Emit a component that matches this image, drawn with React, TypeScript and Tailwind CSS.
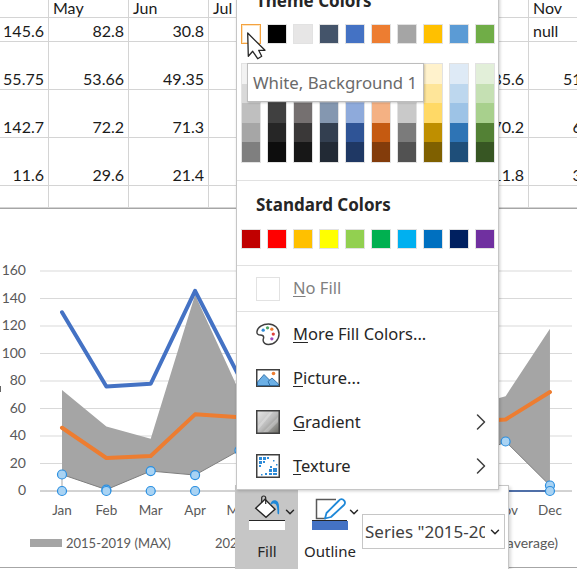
import type { ReactNode } from "react"
import { ChevronDown, ChevronRight } from "lucide-react"

const sheetRows = [
    { h: "h-[18px]", cells: ["", "May", "Jun", "Jul", "", "", "", "Nov"], head: true },
    { h: "h-[24px]", cells: ["145.6", "82.8", "30.8", "", "", "", "", "null"] },
    { h: "h-[48px]", cells: ["55.75", "53.66", "49.35", "", "", "", "85.6", "51.25"] },
    { h: "h-[48px]", cells: ["142.7", "72.2", "71.3", "", "", "", "70.2", "60.4"] },
    { h: "h-[48px]", cells: ["11.6", "29.6", "21.4", "", "", "", "11.8", "36.1"] },
    { h: "h-[22px]", cells: ["", "", "", "", "", "", "", ""] },
]

const themeTop = ["#ffffff", "#000000", "#e7e6e6", "#44546a", "#4472c4", "#ed7d31", "#a5a5a5", "#ffc000", "#5b9bd5", "#70ad47"]

const themeShades = [
    ["#f2f2f2", "#d9d9d9", "#bfbfbf", "#a6a6a6", "#7f7f7f"],
    ["#7f7f7f", "#595959", "#404040", "#262626", "#0d0d0d"],
    ["#d0cece", "#aeabab", "#757070", "#3a3838", "#171717"],
    ["#d6dce5", "#adb9ca", "#8497b0", "#333f50", "#222a35"],
    ["#d9e2f3", "#b4c6e7", "#8eaadb", "#2f5496", "#1f3864"],
    ["#fbe5d5", "#f7caac", "#f4b183", "#c55a11", "#833c0b"],
    ["#ededed", "#dbdbdb", "#c9c9c9", "#7b7b7b", "#525252"],
    ["#fff2cc", "#fee599", "#ffd966", "#bf8f00", "#7f6000"],
    ["#deeaf6", "#bdd7ee", "#9dc3e6", "#2e74b5", "#1e4e79"],
    ["#e2efd9", "#c5e0b3", "#a8d08d", "#538135", "#375623"],
]

const standard = ["#c00000", "#ff0000", "#ffc000", "#ffff00", "#92d050", "#00b050", "#00b0f0", "#0070c0", "#002060", "#7030a0"]

const months = ["Jan", "Feb", "Mar", "Apr", "May", "Jun", "Jul", "Aug", "Sep", "Oct", "Nov", "Dec"]
const xAt = (i: number) => 62 + i * 44.36
const yAt = (v: number) => 490 - v * 1.375

const maxLine = [130, 76, 78, 145.6, 82.8, 30.8]
const avgLine = [46, 24, 25.5, 55.75, 53.66, 49.35, 50, 50, 50, 50, 52, 72]
const areaTop = [73.5, 47, 38, 142.7, 72.2, 71.3, 60, 60, 60, 60, 69, 118]
const areaBottom = [12, 1, 14.5, 11.6, 29.6, 21.4, 20, 20, 20, 20, 36, 4]

const toCoords = (values: number[]) => values.map((v, i) => `${xAt(i)},${yAt(v)}`)

const Handle = ({ x, y }: { x: number; y: number }) => (
    <circle cx={x} cy={y} r={4.5} fill="#a9d3f3" stroke="#2b8fe0" strokeWidth={1.2} />
)

const Chart = () => (
    <svg className="block" width={577} height={360} viewBox="0 208 577 360">
        {[20, 40, 60, 80, 100, 120, 140, 160].map((v) => (
            <line key={v} x1={40} x2={572} y1={yAt(v)} y2={yAt(v)} stroke="#d9d9d9" />
        ))}
        {[0, 20, 40, 60, 80, 100, 120, 140, 160].map((v) => (
            <text key={v} x={26} y={yAt(v) + 4} textAnchor="end" fontSize={14} fill="#595959" fontFamily="Lato, sans-serif">
                {v}
            </text>
        ))}
        <rect x={0} y={385} width={1} height={6} fill="#666666" />
        <polygon points={[...toCoords(areaTop), ...toCoords(areaBottom).reverse()].join(" ")} fill="#a5a5a5" />
        <polyline points={toCoords(areaBottom).join(" ")} fill="none" stroke="#7f7f7f" />
        <line x1={62} x2={62} y1={yAt(12)} y2={490} stroke="#a5a5a5" />
        <line x1={40} x2={572} y1={490} y2={490} stroke="#a6a6a6" />
        <line x1={505} x2={550} y1={490} y2={490} stroke="#4f6fa8" strokeWidth={2} />
        <polyline points={toCoords(maxLine).join(" ")} fill="none" stroke="#4472c4" strokeWidth={4} strokeLinecap="round" strokeLinejoin="round" />
        <polyline points={toCoords(avgLine).join(" ")} fill="none" stroke="#ed7d31" strokeWidth={4} strokeLinecap="round" strokeLinejoin="round" />
        {[0, 1, 2, 3, 4, 10, 11].map((i) => (
            <Handle key={i} x={xAt(i)} y={yAt(areaBottom[i])} />
        ))}
        {[0, 1, 2, 3, 11].map((i) => (
            <Handle key={i} x={xAt(i)} y={490} />
        ))}
        {months.map((m, i) => (
            <text key={m} x={xAt(i)} y={514} textAnchor="middle" fontSize={13.5} fill="#595959" fontFamily="Lato, sans-serif">
                {m}
            </text>
        ))}
        <rect x={30} y={538} width={32} height={8} fill="#a5a5a5" />
        <text x={66} y={547} fontSize={13} fill="#595959" fontFamily="Lato, sans-serif">2015-2019 (MAX)</text>
        <text x={215} y={547} fontSize={13} fill="#595959" fontFamily="Lato, sans-serif">2020</text>
        <text x={558} y={547} textAnchor="end" fontSize={14} fill="#595959" fontFamily="Lato, sans-serif">(average)</text>
    </svg>
)

const Swatch = ({ color }: { color: string }) => (
    <div className="w-[20px] h-[20px] border border-[#e2e2e2]" style={{ backgroundColor: color }} />
)

const Palette = () => (
    <svg width={25} height={25} viewBox="0 0 25 25">
        <path d="M13 1.5C7 1.500 1.500 5 1 9.500c-.3 2.500 1.500 3.500 3.500 3.500s3.500.5 3.500 2.500c0 1-.6 1.600-.6 3 0 2.500 2.600 4.500 5.600 4.500 6 0 11-5 11-11S19 1.500 13 1.500z" fill="#fff" stroke="#404040" strokeWidth={1.5} />
        <circle cx={7.5} cy={8} r={1.7} fill="#2e8bd8" />
        <circle cx={12} cy={5.5} r={1.7} fill="#4aa564" />
        <circle cx={16.5} cy={7} r={1.7} fill="#ed7d31" />
        <circle cx={18} cy={12} r={1.7} fill="#e0403c" />
        <circle cx={16.5} cy={17} r={1.7} fill="#a24bc0" />
    </svg>
)

const PictureIcon = () => (
    <svg width={24} height={18} viewBox="0 0 24 18">
        <rect x={0.75} y={0.75} width={22.5} height={16.5} fill="#fff" stroke="#404040" strokeWidth={1.5} />
        <path d="M1.5 13 8 5.5l7 7-1 4H1.5z" fill="#6cb0e6" stroke="#1f5f99" strokeWidth={0.8} />
        <path d="M12 12.5 16 9l6.5 6v1.5H14z" fill="#6cb0e6" stroke="#1f5f99" strokeWidth={0.8} />
        <circle cx={17.5} cy={4.5} r={1.8} fill="#ed7d31" />
    </svg>
)

const GradientIcon = () => (
    <svg width={24} height={24} viewBox="0 0 24 24">
        <defs>
            <linearGradient id="menuGradient" x1="0" y1="0" x2="1" y2="1">
                <stop offset="0" stopColor="#e8e8e8" />
                <stop offset="0.5" stopColor="#bdbdbd" />
                <stop offset="1" stopColor="#66665f" />
            </linearGradient>
        </defs>
        <rect x={0.75} y={0.75} width={22.5} height={22.5} fill="url(#menuGradient)" stroke="#404040" strokeWidth={1.5} />
        <path d="M2 16 14 2h3L2 20zM7 22 22 7v5L12 22z" fill="#fff" opacity={0.25} />
    </svg>
)

const TextureIcon = () => (
    <svg width={24} height={24} viewBox="0 0 24 24">
        <rect x={0.75} y={0.75} width={22.5} height={22.5} fill="#fff" stroke="#404040" strokeWidth={1.5} />
        <g fill="#2e8bd8">
            <rect x={3} y={3} width={3} height={3} />
            <rect x={7} y={3} width={3} height={3} />
            <rect x={3} y={7} width={3} height={3} />
            <rect x={11} y={3} width={2} height={2} />
            <rect x={7} y={7} width={2} height={2} />
            <rect x={3} y={11} width={2} height={2} />
            <rect x={17} y={6} width={1.5} height={1.5} />
            <rect x={14} y={12} width={2} height={2} />
            <rect x={13} y={15} width={3} height={3} />
            <rect x={17} y={14} width={4} height={4} />
            <rect x={17} y={19} width={4} height={2} />
            <rect x={13} y={19} width={3} height={2} />
            <rect x={9} y={19} width={2} height={2} />
            <rect x={5} y={20} width={1.5} height={1.5} />
            <rect x={20} y={10} width={1.5} height={1.5} />
        </g>
    </svg>
)

const MenuItem = ({ icon, mark, rest, arrow }: { icon: ReactNode; mark: string; rest: string; arrow?: boolean }) => (
    <div className="flex items-center h-[44px] pl-[19px] pr-[3px]">
        <div className="w-[24px] flex justify-center">{icon}</div>
        <span className="ml-[13px] text-[16.5px] text-[#262626]">
            <span className="underline underline-offset-2">{mark}</span>
            {rest}
        </span>
        {arrow && <ChevronRight className="ml-auto text-[#404040]" size={28} strokeWidth={1.3} />}
    </div>
)

export default function App() {
    return (
        <div className="relative w-[577px] h-[569px] overflow-hidden bg-white font-['Lato',sans-serif]">
            <div className="w-[609px]">
                {sheetRows.map((row, r) => (
                    <div key={r} className={`grid grid-cols-[49px_80px_80px_80px_80px_80px_80px_80px] ${row.h}`}>
                        {row.cells.map((cell, c) => (
                            <div
                                key={c}
                                className={`border-r border-b border-[#d4d4d4] px-[4px] text-[16px] text-[#1a1a1a] flex items-end overflow-hidden ${row.head ? "leading-[18px]" : "leading-[20px]"} ${row.head || cell === "null" ? "justify-start" : "justify-end"}`}
                            >
                                {cell}
                            </div>
                        ))}
                    </div>
                ))}
            </div>

            <div className="absolute left-0 top-[208px] w-[577px] h-[360px] bg-white border-t border-b border-[#a6a6a6]">
                <Chart />
            </div>

            <div className="absolute left-[235px] top-[485px] w-[274px] h-[90px] bg-white border border-[#c6c6c6] shadow-[2px_2px_3px_rgba(0,0,0,0.15)] flex font-['Noto_Sans',sans-serif]">
                <div className="w-[62px] bg-[#c6c6c6] flex flex-col items-center relative">
                    <svg className="absolute left-[4px] top-[4px]" width={50} height={31} viewBox="240 490 50 31">
                        <path d="M255.7 508.3 265 499.3 275 509.3 266 517.3z" fill="#fff" stroke="#262626" strokeWidth={1.4} />
                        <path d="M261.7 502.5V498a2 2 0 0 1 4 0v6" fill="none" stroke="#262626" strokeWidth={1.2} />
                        <path d="M270.5 505c0-4 3-5.5 5.5-4.5 3 1 3.5 5 3 14l-1.5-1c0-5-.5-8-2-9.5-1.500-1-3.500-.5-5 1z" fill="#1e88d8" />
                        <path d="M249 520.500H285" stroke="#262626" strokeWidth={1} />
                    </svg>
                    <div className="absolute left-[13px] top-[35px] w-[36px] h-[9px] bg-white" />
                    <ChevronDown className="absolute left-[47px] top-[19px] text-[#262626]" size={14} strokeWidth={2.5} />
                    <span className="absolute top-[54px] text-[15px] text-[#262626]">Fill</span>
                </div>
                <div className="w-[64px] relative">
                    <svg className="absolute left-[14px] top-[12px]" width={36} height={23} viewBox="312 498 36 23">
                        <path d="M336 499.500H316.500V518.500H326" fill="none" stroke="#595959" strokeWidth={1.5} />
                        <path d="M325 518.500 326.500 513 339 500.500a3 3 0 0 1 5 0 3 3 0 0 1 0 4.500L331 517z" fill="#fff" stroke="#1e88d8" strokeWidth={1.8} strokeLinejoin="round" />
                        <path d="M312 520.500H347" stroke="#262626" strokeWidth={1} />
                    </svg>
                    <div className="absolute left-[14px] top-[35px] w-[36px] h-[9px] bg-[#4472c4]" />
                    <ChevronDown className="absolute left-[49px] top-[19px] text-[#262626]" size={14} strokeWidth={2.5} />
                    <span className="absolute left-[6px] top-[54px] text-[15px] text-[#262626]">Outline</span>
                </div>
                <div className="mt-[28px] w-[143px] h-[35px] border border-[#c6c6c6] flex items-center pl-[2px] pr-[2px] text-[17px] text-[#404040] overflow-hidden">
                    <span className="w-[120px] overflow-hidden whitespace-nowrap">Series "2015-2019</span>
                    <ChevronDown className="ml-auto shrink-0 text-[#262626]" size={14} strokeWidth={2.5} />
                </div>
            </div>

            <div className="absolute left-[236px] top-[-16px] w-[263px] h-[506px] bg-white border border-[#c6c6c6] shadow-[1px_1px_3px_rgba(0,0,0,0.2)] flex flex-col font-['Noto_Sans',sans-serif]">
                <div className="h-[32px] flex items-center pl-[19px] text-[17px] font-bold text-[#262626]">Theme Colors</div>
                <div className="mt-[7px] pl-[4px] flex gap-[6px]">
                    {themeTop.map((color, i) =>
                        i === 0 ? (
                            <div key={color} className="w-[20px] h-[20px] bg-white border-[1.5px] border-[#f4a23f] shadow-[inset_0_0_0_1px_#fde4c0]" />
                        ) : (
                            <Swatch key={color} color={color} />
                        )
                    )}
                </div>
                <div className="mt-[19px] pl-[4px] flex gap-[6px]">
                    {themeShades.map((col, i) => (
                        <div key={i} className="w-[20px] h-[100px] border border-[#e2e2e2] flex flex-col overflow-hidden">
                            {col.map((color) => (
                                <div key={color} className="flex-1" style={{ backgroundColor: color }} />
                            ))}
                        </div>
                    ))}
                </div>
                <div className="mt-[17px] h-px bg-[#e1e1e1]" />
                <div className="h-[48px] flex items-center pl-[19px] text-[17px] font-bold text-[#262626]">Standard Colors</div>
                <div className="pl-[4px] flex gap-[6px]">
                    {standard.map((color) => (
                        <Swatch key={color} color={color} />
                    ))}
                </div>
                <div className="mt-[16px] h-px bg-[#e1e1e1]" />
                <div className="flex items-center h-[45px] pl-[19px]">
                    <div className="w-[24px] h-[24px] border border-[#e2e2e2]" />
                    <span className="ml-[13px] text-[16.5px] text-[#7f7f7f]">
                        <span className="underline underline-offset-2">N</span>o Fill
                    </span>
                </div>
                <div className="h-px bg-[#e1e1e1]" />
                <div className="flex flex-col">
                    <MenuItem icon={<Palette />} mark="M" rest="ore Fill Colors..." />
                    <MenuItem icon={<PictureIcon />} mark="P" rest="icture..." />
                    <MenuItem icon={<GradientIcon />} mark="G" rest="radient" arrow />
                    <MenuItem icon={<TextureIcon />} mark="T" rest="exture" arrow />
                </div>
            </div>

            <div className="absolute left-[247px] top-[63px] w-[177px] h-[39px] bg-white border border-[#bdbdbd] shadow-[1px_1px_2px_rgba(0,0,0,0.2)] flex items-center pl-[5px] pt-[1px] text-[16.8px] text-[#6a6a6a] whitespace-nowrap font-['Noto_Sans',sans-serif]">
                White, Background 1
            </div>

            <svg className="absolute left-[246px] top-[32px]" width={21} height={29} viewBox="0 0 21 29">
                <path d="M1.700 1 2.300 24.300 6.700 19.300 11.700 26.700 15.700 24.300 12.700 18.300H19z" fill="#fff" stroke="#262626" strokeWidth={1.3} strokeLinejoin="round" />
            </svg>
        </div>
    )
}
